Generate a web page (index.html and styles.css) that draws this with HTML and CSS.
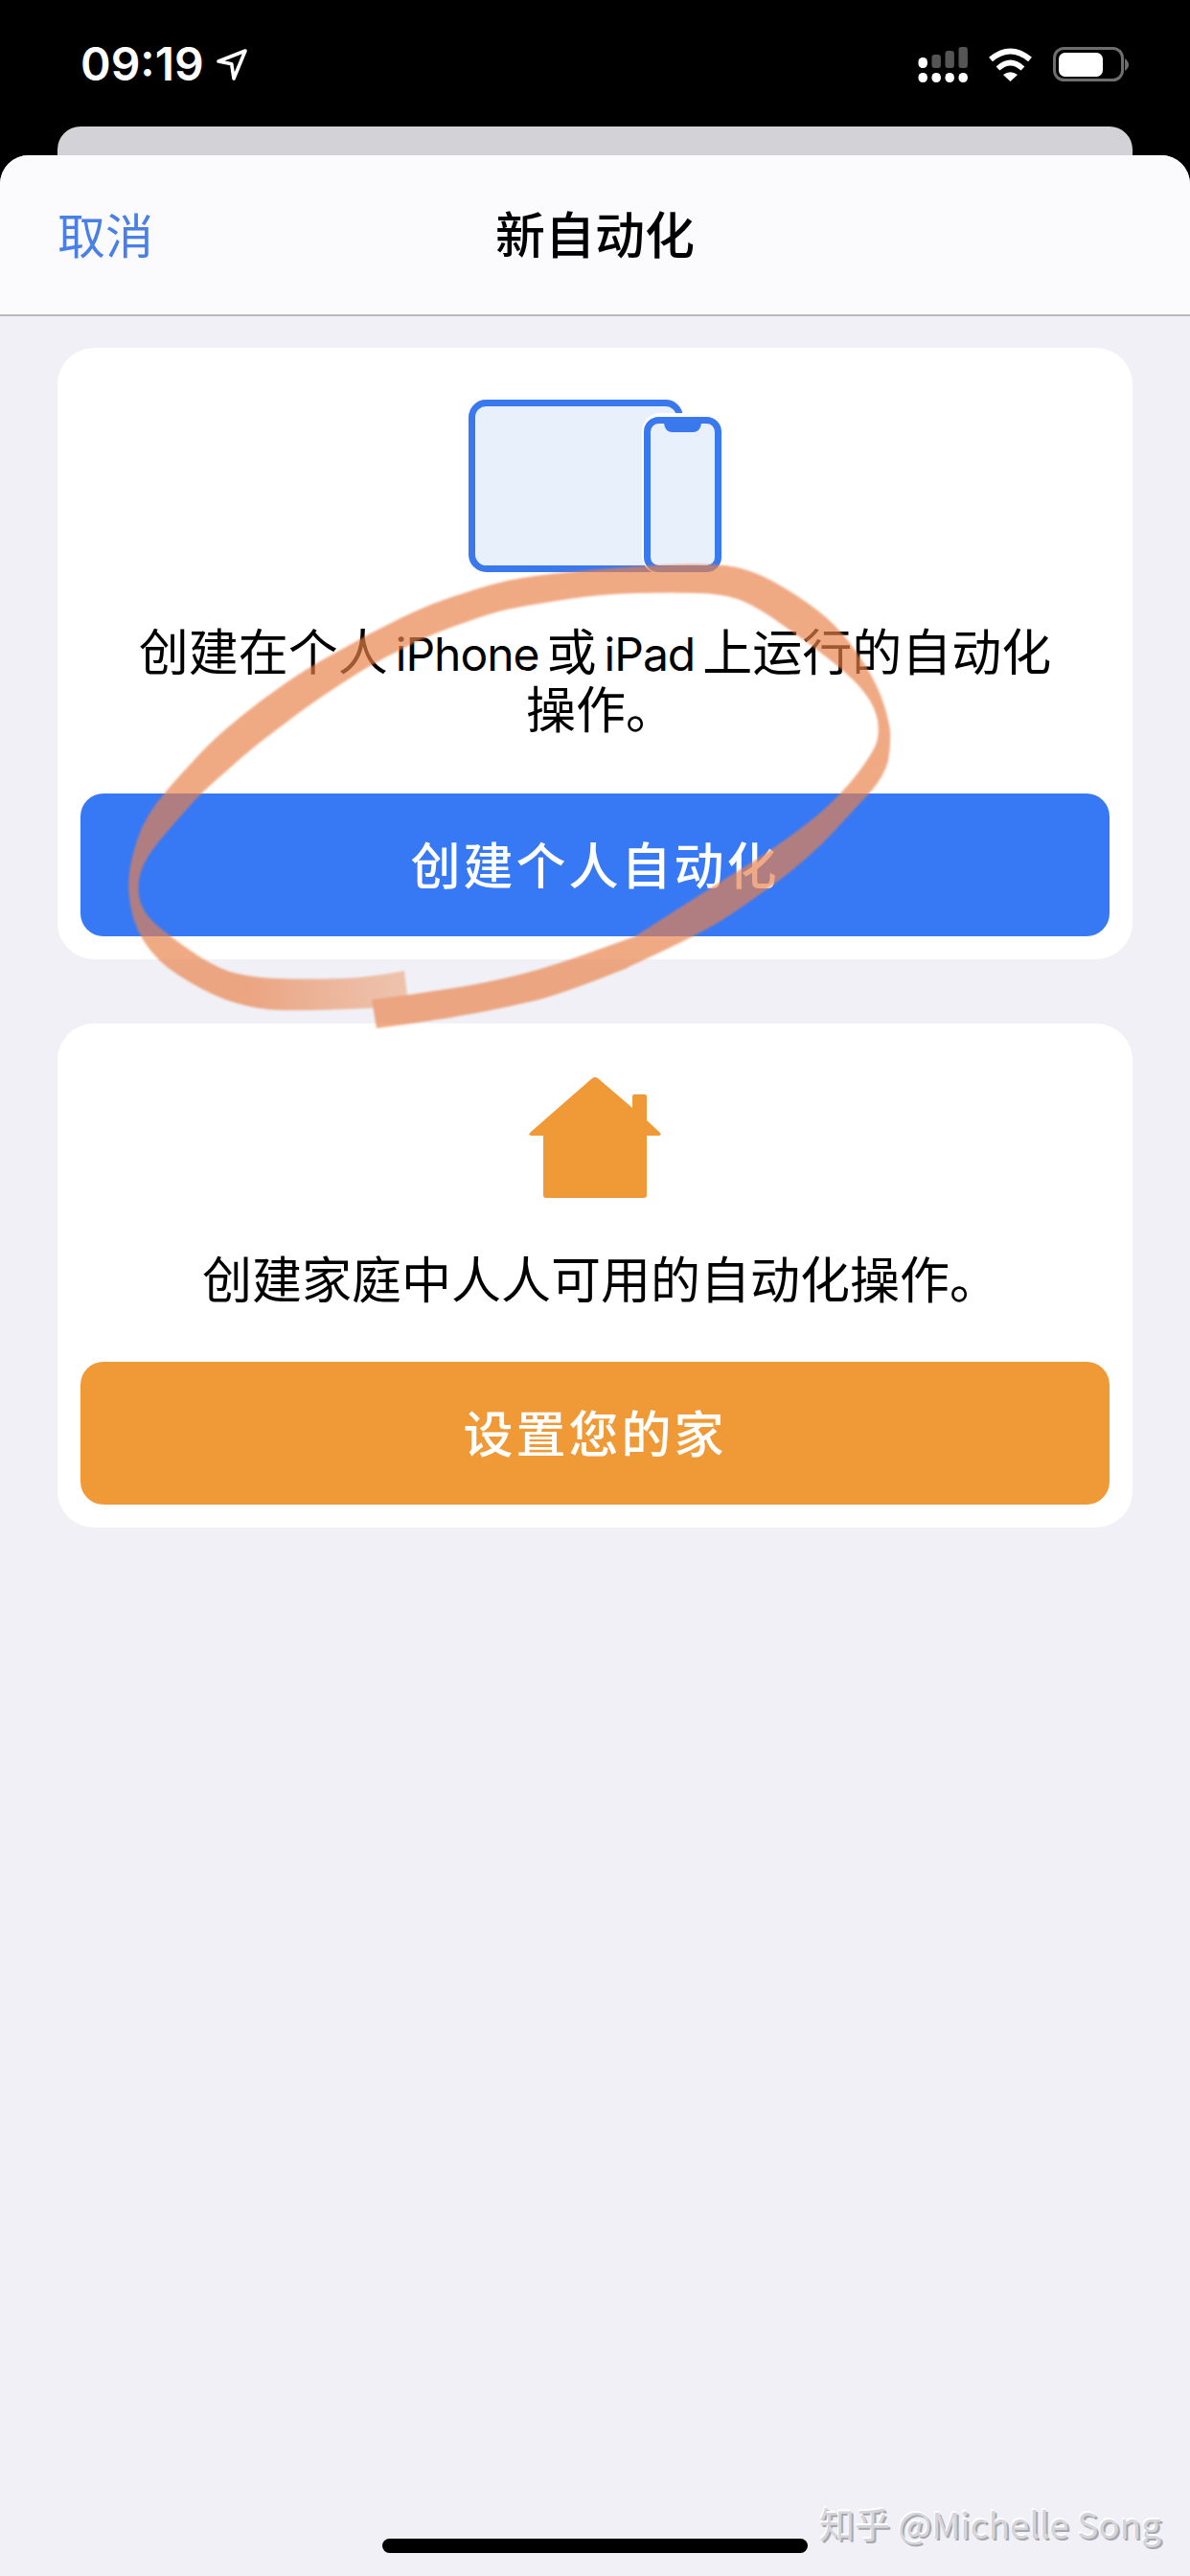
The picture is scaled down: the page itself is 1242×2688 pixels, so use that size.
FILE: index.html
```html
<!DOCTYPE html>
<html lang="zh-CN">
<head>
    <meta charset="UTF-8">
    <meta name="viewport" content="width=device-width, initial-scale=1.0">
    <title>新自动化</title>
    <link rel="stylesheet" href="styles.css">
</head>
<body>
    <div class="phone">
        <div class="status-bar">
            <div class="status-left">
                <span class="time">09:19</span>
                <svg class="arrow-icon" viewBox="0 0 32 33" width="32" height="33">
                    <path d="M2 13 L30 2 L18 31 L15.7 15.7 Z" fill="none" stroke="#fff" stroke-width="3.6" stroke-linejoin="round"/>
                </svg>
            </div>
            <div class="status-right">
                <svg viewBox="0 0 52 37" width="52" height="37">
                    <rect x="0.5" y="27" width="9.4" height="10" rx="4.6" fill="#fff"/>
                    <rect x="14.5" y="27" width="9.4" height="10" rx="4.6" fill="#fff"/>
                    <rect x="28.5" y="27" width="9.4" height="10" rx="4.6" fill="#fff"/>
                    <rect x="42.5" y="27" width="9.4" height="10" rx="4.6" fill="#fff"/>
                    <rect x="0.5" y="11" width="9.4" height="11" rx="4.4" fill="#fff"/>
                    <rect x="14.5" y="8" width="9.4" height="14" rx="3" fill="#555"/>
                    <rect x="28.5" y="4" width="9.4" height="18" rx="3" fill="#555"/>
                    <rect x="42.5" y="0" width="9.4" height="22" rx="3" fill="#555"/>
                </svg>
                <svg viewBox="0 0 47 36" width="47" height="36">
                    <path d="M3 13 Q23.5 -4 44 13" fill="none" stroke="#fff" stroke-width="6"/>
                    <path d="M10.5 22.5 Q23.5 10.5 36.5 22.5" fill="none" stroke="#fff" stroke-width="5.6"/>
                    <path d="M23.5 36 L16 29 Q23.5 23.5 31 29 Z" fill="#fff"/>
                </svg>
                <svg viewBox="0 0 79 36" width="79" height="36">
                    <rect x="1.5" y="1.5" width="71" height="33" rx="10" fill="none" stroke="#6e6e6e" stroke-width="3"/>
                    <rect x="6" y="6" width="46" height="25" rx="6.5" fill="#fff"/>
                    <path d="M75 12 Q79 15 79 18.5 Q79 22 75 25 Z" fill="#6e6e6e"/>
                </svg>
            </div>
        </div>

        <div class="sheet-back"></div>

        <div class="sheet">
            <header class="nav">
                <span class="nav-cancel">取消</span>
                <span class="nav-title">新自动化</span>
                <span></span>
            </header>

            <main class="content">
                <section class="card">
                    <svg class="card-icon" viewBox="0 0 264 180" width="264" height="180">
                        <rect x="3.5" y="3.5" width="217" height="173" rx="15" fill="#e8f0fc" stroke="#3a78ee" stroke-width="7"/>
                        <rect x="181" y="14" width="87" height="168" rx="19" fill="#fff"/>
                        <rect x="186.5" y="21.5" width="74" height="155" rx="12" fill="#e8f0fc" stroke="#3a78ee" stroke-width="7"/>
                        <path d="M204 22 H243 Q243 34 234 34 H213 Q204 34 204 22 Z" fill="#3a78ee"/>
                    </svg>
                    <p class="card-text">创建在个人<span class="latin">iPhone</span>或<span class="latin">iPad</span>上运行的自动化操作<span class="punct">。</span></p>
                    <div class="card-btn btn-blue">创建个人自动化</div>
                </section>

                <section class="card card-home">
                    <svg class="card-icon" viewBox="0 0 138 126" width="138" height="126">
                        <path d="M69 0 Q71 0 73 2 L108 32 V20 Q108 18 110 18 H121 Q123 18 123 20 V45 L137 58 Q139 61 135 61 H123 V123 Q123 126 120 126 H18 Q15 126 15 123 V61 H3 Q-1 61 1 58 L65 2 Q67 0 69 0 Z" fill="#f09a37"/>
                    </svg>
                    <p class="card-text">创建家庭中人人可用的自动化操作<span class="punct">。</span></p>
                    <div class="card-btn btn-orange">设置您的家</div>
                </section>
            </main>

            <div class="home-bar"></div>
        </div>

        <div class="watermark">知乎 @Michelle Song</div>

        <!-- hand drawn circle on top of the screenshot -->
        <svg class="scribble" viewBox="0 0 1242 2688" width="1242" height="2688">
            <defs>
                <radialGradient id="tailFade" gradientUnits="userSpaceOnUse" cx="426" cy="1030" r="170">
                    <stop offset="0" stop-color="#eeb08e"/>
                    <stop offset="0.5" stop-color="#eb9a70"/>
                    <stop offset="1" stop-color="#ea824a"/>
                </radialGradient>
            </defs>
            <g class="scribble-ink">
                <path fill="url(#tailFade)" d="M422 1013 L425 1038 L387 1052 Q320 1055 290 1054 Q260 1052 235 1043 Q210 1033 187 1018 Q163 1003 150 982 Q137 960 135 937 Q132 913 140 887 Q147 860 162 840 Q177 820 199 797 Q220 773 245 753 Q270 732 295 715 Q320 697 354 679 Q387 660 420 644 Q453 628 487 618 Q520 607 540 604 Q560 600 615 595 Q670 590 712 589 Q753 588 773 593 Q793 598 818 613 Q843 628 862 644 Q880 660 895 682 Q910 703 919 725 Q927 747 929 762 Q930 777 927 794 Q923 810 908 827 Q893 843 870 868 Q847 893 814 918 Q780 943 754 960 Q727 977 647 1013 L663 977 L705 950 Q747 923 789 897 Q830 870 855 849 Q880 827 895 807 Q910 787 914 777 Q918 767 916 752 Q913 737 903 724 Q893 710 868 690 Q843 670 818 653 Q793 635 777 628 Q760 620 730 619 Q700 618 664 619 Q627 620 594 625 Q560 630 540 634 Q520 637 487 649 Q453 660 420 677 Q387 693 354 715 Q320 737 292 759 Q263 780 237 804 Q210 827 199 840 Q187 853 170 873 Q153 893 148 907 Q143 920 145 935 Q147 950 162 964 Q177 977 199 992 Q220 1007 240 1014 Q260 1020 290 1021 Q320 1022 354 1021 Q387 1020 422 1013 Z"/>
                <path fill="#ea824a" d="M655 1010 L647 1013 Q580 1040 550 1046 Q520 1053 486 1059 Q453 1065 393 1073 L388 1043 L427 1038 L480 1030 Q520 1023 550 1015 Q580 1007 621 992 L663 977 L670 974 Z"/>
            </g>
        </svg>
    </div>
</body>
</html>
```

FILE: styles.css
```css
html, body {
    margin: 0;
    padding: 0;
    background-color: #000;
}
body {
    font-family: Inter, "Noto Sans CJK SC", sans-serif;
}
.phone {
    position: relative;
    width: 1242px;
    height: 2688px;
    display: flex;
    flex-direction: column;
    overflow: hidden;
    background-color: #000;
}
.status-bar {
    height: 132px;
    box-sizing: border-box;
    padding: 49px 64px 0 84px;
    display: flex;
    justify-content: space-between;
    align-items: flex-start;
    flex-shrink: 0;
}
.status-left {
    display: flex;
    align-items: flex-start;
    gap: 13px;
}
.time {
    color: #fff;
    font-size: 48px;
    font-weight: 600;
    line-height: 36px;
}
.arrow-icon {
    margin-top: 2px;
}
.status-right {
    display: flex;
    align-items: flex-start;
    gap: 21px;
}
.status-right svg {
    display: block;
}
.sheet-back {
    height: 30px;
    margin: 0 60px;
    background-color: #d3d3d7;
    border-radius: 24px 24px 0 0;
    flex-shrink: 0;
}
.sheet {
    flex: 1;
    display: flex;
    flex-direction: column;
    background-color: #f0f0f6;
    border-radius: 30px 30px 0 0;
    overflow: hidden;
}
.nav {
    height: 168px;
    padding: 0 60px 5px;
    display: grid;
    grid-template-columns: 1fr auto 1fr;
    align-items: center;
    background-color: #fbfbfd;
    border-bottom: 2px solid #b8b8bb;
    box-sizing: border-box;
    flex-shrink: 0;
}
.nav-cancel {
    color: #4a80e4;
    font-size: 50px;
}
.nav-title {
    color: #000;
    font-size: 52px;
    font-weight: 500;
}
.content {
    padding: 33px 60px 0;
    display: flex;
    flex-direction: column;
    gap: 67px;
}
.card {
    padding: 54px 24px 24px;
    display: flex;
    flex-direction: column;
    align-items: center;
    background-color: #fff;
    border-radius: 38px;
}
.card-home {
    padding-top: 56px;
}
.card-icon {
    display: block;
    overflow: visible;
}
.card-text {
    align-self: stretch;
    margin: 55px 0 57px;
    padding: 0 40px;
    color: #000;
    font-size: 52px;
    line-height: 59px;
    text-align: center;
    text-spacing-trim: space-all;
}
.card-home .card-text {
    margin: 57px 0 55px;
}
.latin {
    margin: 0 8px;
    font-size: 48px;
    letter-spacing: -1px;
}
.punct {
    margin-right: -12px;
}
.card-btn {
    align-self: stretch;
    height: 149px;
    padding-bottom: 4px;
    box-sizing: border-box;
    display: flex;
    align-items: center;
    justify-content: center;
    color: #fff;
    font-size: 52px;
    font-weight: 500;
    letter-spacing: 3px;
    border-radius: 24px;
}
.btn-blue {
    background-color: #3778f5;
}
.btn-orange {
    background-color: #f09a37;
}
.home-bar {
    width: 444px;
    height: 15px;
    margin: auto auto 24px;
    background-color: #000;
    border-radius: 8px;
}
.watermark {
    position: absolute;
    left: 855px;
    top: 2608px;
    color: #d4d4da;
    font-family: "Noto Sans CJK SC", sans-serif;
    font-size: 37px;
    line-height: 50px;
    white-space: nowrap;
    text-shadow: -1px -2px 0 #fff, 2px 2px 0 #a8a8ac;
}
.scribble {
    position: absolute;
    left: 0;
    top: 0;
    pointer-events: none;
}
.scribble-ink {
    opacity: 0.68;
    filter: blur(0.8px);
}
```
